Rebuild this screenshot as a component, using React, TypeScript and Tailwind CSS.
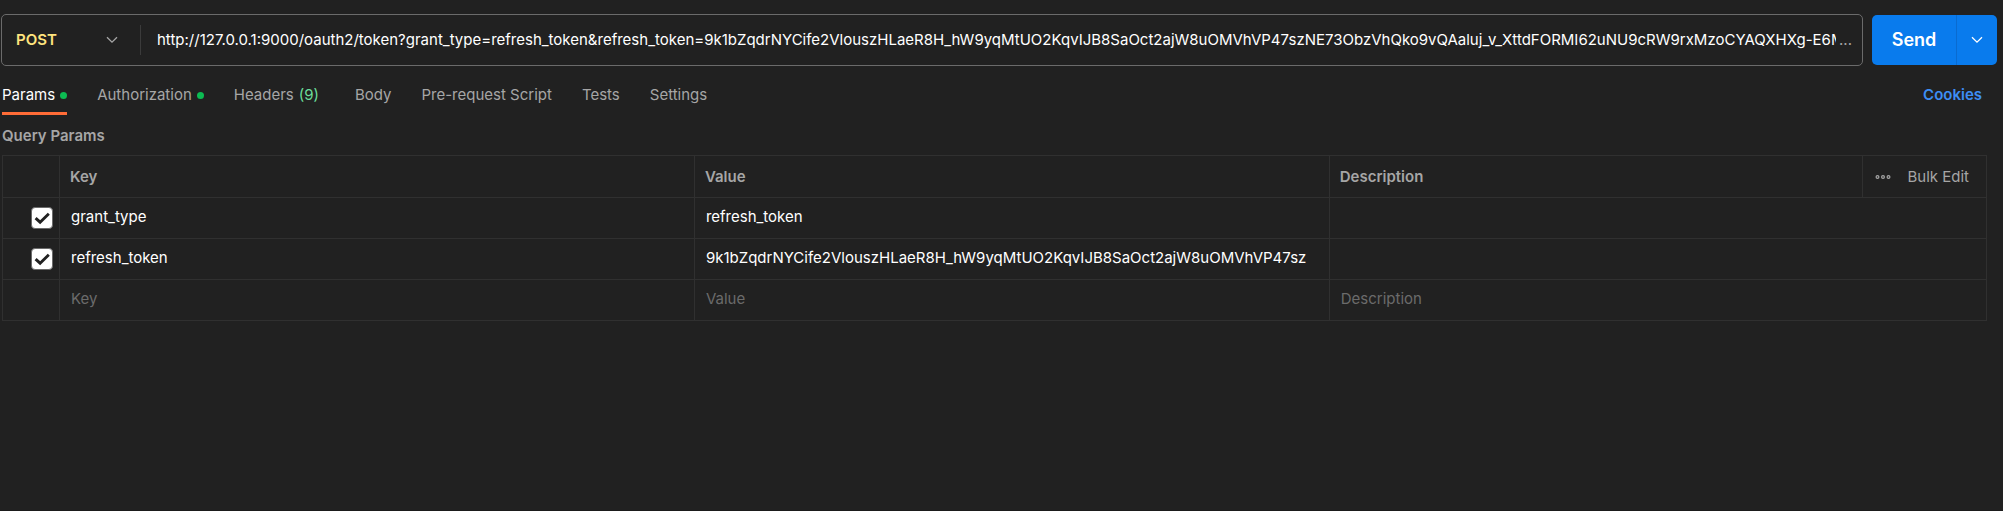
import React, { useState } from "react";

const REQUEST_URL =
  "http://127.0.0.1:9000/oauth2/token?grant_type=refresh_token&refresh_token=9k1bZqdrNYCife2VlouszHLaeR8H_hW9yqMtUO2KqvIJB8SaOct2ajW8uOMVhVP47szNE73ObzVhQko9vQAaluj_v_XttdFORMI62uNU9cRW9rxMzoCYAQXHXg-E6M";

type Tab = { name: string; dot?: boolean; count?: number };

const TABS: Tab[] = [
  { name: "Params", dot: true },
  { name: "Authorization", dot: true },
  { name: "Headers", count: 9 },
  { name: "Body" },
  { name: "Pre-request Script" },
  { name: "Tests" },
  { name: "Settings" },
];

const PARAMS = [
  { key: "grant_type", value: "refresh_token" },
  {
    key: "refresh_token",
    value: "9k1bZqdrNYCife2VlouszHLaeR8H_hW9yqMtUO2KqvIJB8SaOct2ajW8uOMVhVP47sz",
  },
];

function Chevron({ className }: { className: string }) {
  return (
    <svg className={className} width="12" height="8" viewBox="0 0 12 8" fill="none" aria-hidden="true">
      <path d="M1 1.2 6 6.2 11 1.2" stroke="currentColor" strokeWidth="1.3" />
    </svg>
  );
}

function Cell({ label, value = "", hint = false }: { label: string; value?: string; hint?: boolean }) {
  return (
    <input
      type="text"
      aria-label={label}
      defaultValue={value}
      placeholder={hint ? label : undefined}
      className="block h-10 w-full bg-transparent px-[11px] pb-[3px] text-white outline-none placeholder:text-[#6b6b6b]"
    />
  );
}

function RowCheckbox({ label }: { label: string }) {
  return (
    <label className="relative ml-auto mr-[6px] block size-[22px]">
      <input
        type="checkbox"
        defaultChecked
        aria-label={label}
        className="peer block size-full appearance-none rounded border border-[#6b6b6b] checked:bg-white"
      />
      <svg
        className="pointer-events-none absolute inset-0 hidden peer-checked:block"
        width="22"
        height="22"
        viewBox="0 0 22 22"
        fill="none"
        aria-hidden="true"
      >
        <path d="M4.6 11.2 9.1 15.2 17.8 6.8" stroke="#212121" strokeWidth="2.9" />
      </svg>
    </label>
  );
}

export default function App() {
  const [active, setActive] = useState("Params");

  return (
    <main className="min-h-screen border-b border-[#1b1b1b] bg-[#212121] pt-[14px] font-['Inter',sans-serif] text-[15px] leading-5 text-[#a6a6a6]">
      <form className="flex items-center gap-[9px] pl-px pr-[6px]" onSubmit={(e) => e.preventDefault()}>
        <div className="flex h-[52px] min-w-0 flex-1 items-center rounded-[5px] border border-[#6b6b6b]">
          <div className="relative flex h-[30px] w-[139px] shrink-0 items-center border-r border-[#3b3b3b]">
            <select
              aria-label="Method"
              className="h-full w-full appearance-none bg-transparent pl-[14px] font-semibold text-[#ffe47e] outline-none"
            >
              <option>POST</option>
            </select>
            <Chevron className="pointer-events-none absolute right-[22px] text-[#a6a6a6]" />
          </div>
          <input
            type="text"
            aria-label="Request URL"
            defaultValue={REQUEST_URL}
            className="ml-4 min-w-0 flex-1 bg-transparent text-white outline-none"
          />
          <span className="ml-[3px] mr-[10px]">...</span>
        </div>
        <div className="flex h-[50px] w-[125px] shrink-0 overflow-hidden rounded-[5px] bg-[#097bed] text-white">
          <button type="submit" className="flex-1 text-lg font-semibold">
            Send
          </button>
          <button
            type="button"
            aria-label="Send options"
            className="flex w-[41px] items-center justify-center border-l border-[#0a6bd0]"
          >
            <Chevron className="text-white" />
          </button>
        </div>
      </form>

      <div className="flex items-start justify-between pl-[2px] pr-[21px] pt-[19px]">
        <nav className="flex gap-[30px]">
          {TABS.map((tab) => (
            <button
              key={tab.name}
              type="button"
              onClick={() => setActive(tab.name)}
              className={
                active === tab.name
                  ? "flex items-center gap-[5px] border-b-3 border-[#ff6c37] pb-[7px] text-white"
                  : "flex items-center gap-[5px] border-b-3 border-transparent pb-[7px]"
              }
            >
              {tab.name}
              {tab.dot && <span className="size-[7px] rounded-full bg-[#0cbb52]" />}
              {tab.count && <span className="pr-[6px] text-[#6bdd9a]">({tab.count})</span>}
            </button>
          ))}
        </nav>
        <a href="#cookies" className="font-semibold text-[#3d8ef5]">
          Cookies
        </a>
      </div>

      <h2 className="pb-[9px] pl-[2px] pt-[11px] font-semibold">Query Params</h2>

      <div className="pl-[2px] pr-4">
        <table className="w-full table-fixed border-collapse [&_td]:border [&_td]:border-[#303030] [&_td]:p-0 [&_th]:border [&_th]:border-[#303030]">
          <colgroup>
            <col className="w-[57px]" />
            <col className="w-[32%]" />
            <col className="w-[32%]" />
            <col />
            <col className="w-[124px]" />
          </colgroup>
          <thead>
            <tr className="h-[42px] text-left">
              <th aria-label="Enabled" />
              <th className="px-[10px] font-semibold">Key</th>
              <th className="px-[10px] font-semibold">Value</th>
              <th className="px-[10px] font-semibold">Description</th>
              <th className="p-0 font-normal">
                <div className="flex items-center justify-between pl-3 pr-[17px]">
                  <button type="button" aria-label="More options">
                    <svg width="16" height="6" viewBox="0 0 16 6" fill="none" stroke="currentColor" aria-hidden="true">
                      <circle cx="2.5" cy="3" r="1.4" strokeWidth="1.2" />
                      <circle cx="8" cy="3" r="1.4" strokeWidth="1.2" />
                      <circle cx="13.5" cy="3" r="1.4" strokeWidth="1.2" />
                    </svg>
                  </button>
                  <button type="button">Bulk Edit</button>
                </div>
              </th>
            </tr>
          </thead>
          <tbody>
            {PARAMS.map((p) => (
              <tr key={p.key}>
                <td>
                  <RowCheckbox label={`Enable ${p.key}`} />
                </td>
                <td>
                  <Cell label="Key" value={p.key} />
                </td>
                <td>
                  <Cell label="Value" value={p.value} />
                </td>
                <td colSpan={2}>
                  <Cell label="Description" />
                </td>
              </tr>
            ))}
            <tr>
              <td />
              <td>
                <Cell label="Key" hint />
              </td>
              <td>
                <Cell label="Value" hint />
              </td>
              <td colSpan={2}>
                <Cell label="Description" hint />
              </td>
            </tr>
          </tbody>
        </table>
      </div>
    </main>
  );
}
